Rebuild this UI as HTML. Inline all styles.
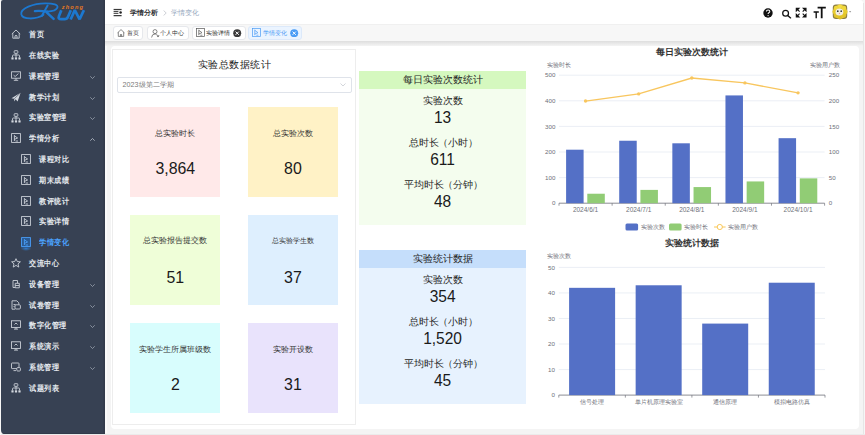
<!DOCTYPE html>
<html><head><meta charset="utf-8"><style>
*{margin:0;padding:0;box-sizing:border-box}
html,body{width:865px;height:435px;overflow:hidden;background:#f3f3f3;font-family:"Liberation Sans",sans-serif;position:relative}
.a{position:absolute}
svg text{font-family:"Liberation Sans",sans-serif}
.mi{position:absolute;left:1px;width:104px;height:20px;color:#e3e7ec;font-size:8px;font-weight:bold;line-height:20px;white-space:nowrap}
.mi .t{position:absolute;left:27.8px;top:0;transform:scale(0.94,1.06);transform-origin:0 52%}
.mi.sub .t{left:37.6px}
.mi svg{position:absolute}
.tab{position:absolute;top:26px;height:13.6px;background:#fff;border:1px solid #e6e8ec;border-radius:3px;font-size:6.4px;line-height:11.6px;color:#333;white-space:nowrap}
.tab.act{background:#ebf4ff;border-color:#dce9fa;color:#4a9cf5}
.sc{position:absolute;width:90px;height:90px}
.sc .l{position:absolute;left:0;width:100%;text-align:center;font-size:7.6px;color:#333;white-space:nowrap;line-height:9px}
.sc .v{position:absolute;left:0;width:100%;text-align:center;font-size:15.9px;color:#1a1a1a;line-height:20px}
.pl{margin-left:-1px}.pr{margin-right:-1px}
.mp{position:absolute;left:359.4px;width:166.4px}
.mp .h{position:absolute;left:0;top:0;width:100%;height:17.6px;text-align:center;font-size:10px;line-height:17.6px;color:#262626;white-space:nowrap}
.mp .l{position:absolute;left:0;width:100%;text-align:center;font-size:10px;line-height:12px;color:#262626;white-space:nowrap}
.mp .v{position:absolute;left:0;width:100%;text-align:center;font-size:15.5px;line-height:16px;color:#1a1a1a;transform:scaleY(1.09);transform-origin:50% 0}
</style></head><body>
<div class="a" style="left:1px;top:0;width:104px;height:433.5px;background:#374153;border-radius:2px 0 0 4px;box-shadow:inset -1.5px -1px 0 #323a4a"></div>
<svg class="a" style="left:0;top:0" width="105" height="24" viewBox="0 0 105 24">
<g fill="none" stroke="#1c78d0" stroke-linecap="round">
<path d="M43.5 14.8 C36 19.8 22.5 19.8 21.3 14.2 C20.3 8.5 33 3.3 45.5 3.3 C53.5 3.3 58.5 4.8 57.4 7.6 C56.3 10.4 51.5 11.4 47.2 11.6" stroke-width="1.8"/>
<path d="M34.8 11.1 Q40 10.4 47.5 11.7" stroke-width="2.2"/>
<path d="M47.6 5.6 L41.8 16" stroke-width="2"/>
<path d="M46.6 12.4 L53.6 18.8" stroke-width="2.5"/>
<path d="M61.3 10.3 L59 16 Q57.8 19.2 61.2 19.2 L64.6 19.2 Q67 19.2 68 16.8 L70.8 10.3" stroke-width="2.7" stroke-linecap="butt"/>
<path d="M70.6 19.5 L74.8 10.1 L79.6 19.3 L83.9 10.1" stroke-width="2.7" stroke-linecap="butt" stroke-linejoin="bevel"/>
</g>
<text x="61.8" y="9.1" font-size="5.6" font-weight="bold" font-style="italic" fill="#e97a22" letter-spacing="1.15">zhong</text>
</svg>
<div class="mi" style="top:25px;color:#e3e7ec"><svg style="left:9.6px;top:4.2px" width="10" height="10" viewBox="0 0 10 10"><path d="M0.8 5 L5 1 L9.2 5 M1.8 4.2 V9.2 H8.2 V4.2 M4 9.2 V6.8 Q5 6 6 6.8 V9.2" fill="none" stroke="#d3d8df" stroke-width="0.85"/></svg><span class="t">首页</span></div>
<div class="mi" style="top:46px;color:#e3e7ec"><svg style="left:9.6px;top:4.2px" width="10" height="10" viewBox="0 0 10 10"><g fill="none" stroke="#d3d8df" stroke-width="0.85"><rect x="3.2" y="0.7" width="3.6" height="2.6" rx="0.5"/><path d="M5 3.3 V7 M1.5 7 V5.8 Q1.5 5 2.3 5 H7.7 Q8.5 5 8.5 5.8 V7"/></g><g fill="#d3d8df"><rect x="0.4" y="7.2" width="2.2" height="2.2" rx="0.5"/><rect x="3.9" y="7.2" width="2.2" height="2.2" rx="0.5"/><rect x="7.4" y="7.2" width="2.2" height="2.2" rx="0.5"/></g></svg><span class="t">在线实验</span></div>
<div class="mi" style="top:67px;color:#e3e7ec"><svg style="left:9.6px;top:4.2px" width="10" height="10" viewBox="0 0 10 10"><g fill="none" stroke="#d3d8df" stroke-width="0.85"><rect x="0.6" y="0.8" width="8.8" height="6.4"/><path d="M5 7.2 V9.2 M2.8 9.3 H7.2 M2.6 4.2 L4.2 5.5 L7.4 2.6"/></g></svg><span class="t">课程管理</span><svg style="left:88.5px;top:9px" width="5" height="3" viewBox="0 0 5 3"><path d="M0.3 0.3 L2.5 2.5 L4.7 0.3" fill="none" stroke="#aab1bd" stroke-width="0.7"/></svg></div>
<div class="mi" style="top:87.8px;color:#e3e7ec"><svg style="left:9.6px;top:4.2px" width="10" height="10" viewBox="0 0 10 10"><path d="M0.5 6.2 L9.6 0.8 L6.6 9.6 L4.6 7.3 L3.2 9.6 L3.2 6.8 Z" fill="#d3d8df"/><path d="M3.2 6.8 L9.6 0.8" stroke="#374153" stroke-width="0.6"/></svg><span class="t">教学计划</span><svg style="left:88.5px;top:9px" width="5" height="3" viewBox="0 0 5 3"><path d="M0.3 0.3 L2.5 2.5 L4.7 0.3" fill="none" stroke="#aab1bd" stroke-width="0.7"/></svg></div>
<div class="mi" style="top:108.4px;color:#e3e7ec"><svg style="left:9.6px;top:4.2px" width="10" height="10" viewBox="0 0 10 10"><g fill="none" stroke="#d3d8df" stroke-width="0.85"><rect x="3.2" y="0.7" width="3.6" height="2.6" rx="0.5"/><path d="M5 3.3 V7 M1.5 7 V5.8 Q1.5 5 2.3 5 H7.7 Q8.5 5 8.5 5.8 V7"/></g><g fill="#d3d8df"><rect x="0.4" y="7.2" width="2.2" height="2.2" rx="0.5"/><rect x="3.9" y="7.2" width="2.2" height="2.2" rx="0.5"/><rect x="7.4" y="7.2" width="2.2" height="2.2" rx="0.5"/></g></svg><span class="t">实验室管理</span><svg style="left:88.5px;top:9px" width="5" height="3" viewBox="0 0 5 3"><path d="M0.3 0.3 L2.5 2.5 L4.7 0.3" fill="none" stroke="#aab1bd" stroke-width="0.7"/></svg></div>
<div class="mi" style="top:129px;color:#e3e7ec"><svg style="left:9.6px;top:4.2px" width="10" height="10" viewBox="0 0 10 10"><g fill="none" stroke="#d3d8df" stroke-width="0.85"><rect x="0.6" y="0.6" width="8.8" height="8.8"/><path d="M3.4 2.2 V8 M3.4 2.8 L6.6 5 L3.4 6.4 M4.6 8 H7"/></g></svg><span class="t">学情分析</span><svg style="left:88.5px;top:8.5px" width="5" height="3" viewBox="0 0 5 3"><path d="M0.3 2.7 L2.5 0.5 L4.7 2.7" fill="none" stroke="#cfd4dc" stroke-width="0.7"/></svg></div>
<div class="mi sub" style="top:150px;color:#e3e7ec"><svg style="left:19.6px;top:4.2px" width="10" height="10" viewBox="0 0 10 10"><g fill="none" stroke="#d3d8df" stroke-width="0.85"><rect x="0.6" y="0.6" width="8.8" height="8.8"/><path d="M3.4 2.2 V8 M3.4 2.8 L6.6 5 L3.4 6.4 M4.6 8 H7"/></g></svg><span class="t">课程对比</span></div>
<div class="mi sub" style="top:170.8px;color:#e3e7ec"><svg style="left:19.6px;top:4.2px" width="10" height="10" viewBox="0 0 10 10"><g fill="none" stroke="#d3d8df" stroke-width="0.85"><rect x="0.6" y="0.6" width="8.8" height="8.8"/><path d="M3.4 2.2 V8 M3.4 2.8 L6.6 5 L3.4 6.4 M4.6 8 H7"/></g></svg><span class="t">期末成绩</span></div>
<div class="mi sub" style="top:191.5px;color:#e3e7ec"><svg style="left:19.6px;top:4.2px" width="10" height="10" viewBox="0 0 10 10"><g fill="none" stroke="#d3d8df" stroke-width="0.85"><rect x="0.6" y="0.6" width="8.8" height="8.8"/><path d="M3.4 2.2 V8 M3.4 2.8 L6.6 5 L3.4 6.4 M4.6 8 H7"/></g></svg><span class="t">教评统计</span></div>
<div class="mi sub" style="top:212.2px;color:#e3e7ec"><svg style="left:19.6px;top:4.2px" width="10" height="10" viewBox="0 0 10 10"><g fill="none" stroke="#d3d8df" stroke-width="0.85"><rect x="0.6" y="0.6" width="8.8" height="8.8"/><path d="M3.4 2.2 V8 M3.4 2.8 L6.6 5 L3.4 6.4 M4.6 8 H7"/></g></svg><span class="t">实验详情</span></div>
<div class="mi sub" style="top:233px;color:#4ba3ff"><svg style="left:19px;top:3.5px" width="12" height="14" viewBox="0 0 12 14"><defs><radialGradient id="gl"><stop offset="0" stop-color="#2d7fd8" stop-opacity="0.9"/><stop offset="1" stop-color="#2d7fd8" stop-opacity="0"/></radialGradient></defs><ellipse cx="6" cy="11.5" rx="5.5" ry="2.5" fill="url(#gl)"/><rect x="1" y="1" width="9.5" height="9.5" fill="#2b5a92"/></svg><svg style="left:19.6px;top:4.2px" width="10" height="10" viewBox="0 0 10 10"><g fill="none" stroke="#4ba3ff" stroke-width="0.85"><rect x="0.6" y="0.6" width="8.8" height="8.8"/><path d="M3.4 2.2 V8 M3.4 2.8 L6.6 5 L3.4 6.4 M4.6 8 H7"/></g></svg><span class="t">学情变化</span></div>
<div class="mi" style="top:254px;color:#e3e7ec"><svg style="left:9.6px;top:4.2px" width="10" height="10" viewBox="0 0 10 10"><path d="M5 0.7 L6.3 3.6 L9.4 3.8 L7 5.9 L7.8 9.1 L5 7.4 L2.2 9.1 L3 5.9 L0.6 3.8 L3.7 3.6 Z" fill="none" stroke="#d3d8df" stroke-width="0.85"/></svg><span class="t">交流中心</span></div>
<div class="mi" style="top:274.8px;color:#e3e7ec"><svg style="left:9.6px;top:4.2px" width="10" height="10" viewBox="0 0 10 10"><g fill="none" stroke="#d3d8df" stroke-width="0.85"><path d="M2 1.5 H6.5 V4.2 M2 1.5 V8.5 H4.2"/><path d="M4.2 4.3 H8.3 V8.8 H4.2 Z M4.2 6.5 H8.3"/></g></svg><span class="t">设备管理</span><svg style="left:88.5px;top:9px" width="5" height="3" viewBox="0 0 5 3"><path d="M0.3 0.3 L2.5 2.5 L4.7 0.3" fill="none" stroke="#aab1bd" stroke-width="0.7"/></svg></div>
<div class="mi" style="top:295.5px;color:#e3e7ec"><svg style="left:9.6px;top:4.2px" width="10" height="10" viewBox="0 0 10 10"><g fill="none" stroke="#d3d8df" stroke-width="0.85"><path d="M1 0.8 H5.8 L7.8 2.8 V4.6 M1 0.8 V9.2 H4"/><rect x="4" y="4.8" width="5.4" height="4.2" rx="1"/><path d="M2.5 4.5 H4.5 M2.5 6.5 H3.5"/></g></svg><span class="t">试卷管理</span><svg style="left:88.5px;top:9px" width="5" height="3" viewBox="0 0 5 3"><path d="M0.3 0.3 L2.5 2.5 L4.7 0.3" fill="none" stroke="#aab1bd" stroke-width="0.7"/></svg></div>
<div class="mi" style="top:316.3px;color:#e3e7ec"><svg style="left:9.6px;top:4.2px" width="10" height="10" viewBox="0 0 10 10"><g fill="none" stroke="#d3d8df" stroke-width="0.85"><rect x="0.5" y="0.8" width="9" height="6.6"/><path d="M3 9.1 H7 M5 7.4 V9.1 M3.5 4.5 L5 3 L6.5 4.5"/></g></svg><span class="t">数字化管理</span><svg style="left:88.5px;top:9px" width="5" height="3" viewBox="0 0 5 3"><path d="M0.3 0.3 L2.5 2.5 L4.7 0.3" fill="none" stroke="#aab1bd" stroke-width="0.7"/></svg></div>
<div class="mi" style="top:337px;color:#e3e7ec"><svg style="left:9.6px;top:4.2px" width="10" height="10" viewBox="0 0 10 10"><g fill="none" stroke="#d3d8df" stroke-width="0.85"><rect x="0.5" y="0.8" width="9" height="6.6"/><path d="M3 9.1 H7 M5 7.4 V9.1 M3.5 4.5 L5 3 L6.5 4.5"/></g></svg><span class="t">系统演示</span><svg style="left:88.5px;top:9px" width="5" height="3" viewBox="0 0 5 3"><path d="M0.3 0.3 L2.5 2.5 L4.7 0.3" fill="none" stroke="#aab1bd" stroke-width="0.7"/></svg></div>
<div class="mi" style="top:357.7px;color:#e3e7ec"><svg style="left:9.6px;top:4.2px" width="10" height="10" viewBox="0 0 10 10"><g fill="none" stroke="#d3d8df" stroke-width="0.85"><rect x="0.5" y="1" width="7.5" height="5.6" rx="0.6"/><path d="M2.5 8.6 H5"/><rect x="5.8" y="5.6" width="3.6" height="3.4" rx="0.8" fill="#374153"/></g></svg><span class="t">系统管理</span><svg style="left:88.5px;top:9px" width="5" height="3" viewBox="0 0 5 3"><path d="M0.3 0.3 L2.5 2.5 L4.7 0.3" fill="none" stroke="#aab1bd" stroke-width="0.7"/></svg></div>
<div class="mi" style="top:378.5px;color:#e3e7ec"><svg style="left:9.6px;top:4.2px" width="10" height="10" viewBox="0 0 10 10"><g fill="none" stroke="#d3d8df" stroke-width="0.85"><rect x="3.2" y="0.7" width="3.6" height="2.6" rx="0.5"/><path d="M5 3.3 V7 M1.5 7 V5.8 Q1.5 5 2.3 5 H7.7 Q8.5 5 8.5 5.8 V7"/></g><g fill="#d3d8df"><rect x="0.4" y="7.2" width="2.2" height="2.2" rx="0.5"/><rect x="3.9" y="7.2" width="2.2" height="2.2" rx="0.5"/><rect x="7.4" y="7.2" width="2.2" height="2.2" rx="0.5"/></g></svg><span class="t">试题列表</span></div>
<div class="a" style="left:105px;top:0;width:758px;height:24px;background:#fff;border-top-right-radius:3px"></div>
<svg class="a" style="left:0;top:0" width="130" height="24" viewBox="0 0 130 24">
<rect x="113.6" y="8.9" width="8" height="1.25" fill="#3a3a3a"/><rect x="113.6" y="10.95" width="4.8" height="1.1" fill="#4a4a4a"/>
<rect x="113.6" y="12.8" width="4.8" height="1.1" fill="#4a4a4a"/><rect x="113.6" y="15" width="8" height="1.25" fill="#3a3a3a"/>
<circle cx="120.6" cy="12.5" r="1.25" fill="#222"/></svg>
<div class="a" style="left:129.5px;top:8px;font-size:7px;font-weight:bold;color:#303133;white-space:nowrap;line-height:9px">学情分析</div>
<svg class="a" style="left:162.5px;top:9.5px" width="4" height="6" viewBox="0 0 4 6"><path d="M0.6 0.5 L3.2 3 L0.6 5.5" fill="none" stroke="#b8bcc4" stroke-width="0.7"/></svg>
<div class="a" style="left:170.7px;top:8px;font-size:7.4px;color:#97a8be;white-space:nowrap;line-height:9px">学情变化</div>
<svg class="a" style="left:0;top:0" width="865" height="24" viewBox="0 0 865 24">
<circle cx="768" cy="13" r="4.7" fill="#111"/>
<path d="M766.4 11.6 Q766.4 9.9 768.1 9.9 Q769.8 9.9 769.8 11.4 Q769.8 12.3 768.8 12.8 Q768.1 13.2 768.1 14" fill="none" stroke="#fff" stroke-width="1.05"/>
<circle cx="768.1" cy="15.6" r="0.6" fill="#fff"/>
<circle cx="785.6" cy="13.3" r="2.9" fill="none" stroke="#111" stroke-width="1.25"/><path d="M787.7 15.4 L790.6 17.9" stroke="#111" stroke-width="1.35" stroke-linecap="round"/>
<g fill="#111" stroke="#111" stroke-width="1.1">
<path d="M796.3 8.3 L799 8.3 L796.3 11 Z M797.2 9.2 L799.6 11.6"/>
<path d="M806 8.3 L803.3 8.3 L806 11 Z M805.1 9.2 L802.7 11.6"/>
<path d="M796.3 17 L799 17 L796.3 14.3 Z M797.2 16.1 L799.6 13.7"/>
<path d="M806 17 L803.3 17 L806 14.3 Z M805.1 16.1 L802.7 13.7"/>
</g>
<path d="M813.6 12 H818.8 M816.2 12 V18.2" stroke="#111" stroke-width="1.4"/>
<path d="M817.6 7.7 H825.8 M821.7 7.7 V18.2" stroke="#111" stroke-width="1.8"/>
<rect x="832.8" y="4.6" width="14.4" height="14.4" rx="3.2" fill="#8c7d45"/>
<circle cx="840" cy="11.8" r="7" fill="#e8cd2e"/>
<circle cx="836" cy="8" r="2.2" fill="#f0d83c"/><circle cx="844" cy="8" r="2.2" fill="#f0d83c"/><circle cx="836" cy="15.6" r="2.2" fill="#e2c42a"/><circle cx="844" cy="15.6" r="2.2" fill="#e2c42a"/>
<circle cx="840" cy="6.2" r="2" fill="#f2dc48"/><circle cx="840" cy="17.4" r="2" fill="#dcbf28"/><circle cx="834.4" cy="11.8" r="2" fill="#e6cb30"/><circle cx="845.6" cy="11.8" r="2" fill="#e6cb30"/>
<ellipse cx="839.4" cy="12" rx="3.9" ry="3.6" fill="#f1ece2"/>
<circle cx="837.8" cy="11.2" r="0.85" fill="#2f3a3a"/><circle cx="841.2" cy="11.2" r="0.85" fill="#2f3a3a"/>
<circle cx="839.5" cy="13.4" r="0.6" fill="#e49a9a"/>
<path d="M849 11.2 L851.2 11.2 L850.1 12.5Z" fill="#777"/>
</svg>
<div class="a" style="left:105px;top:24px;width:758px;height:17px;background:#f7f7f7;border-top:1px solid #f0f0f0"></div>
<div class="tab" style="left:112.5px;width:30.19999999999999px"><svg class="a" style="left:3.8px;top:2px" width="8" height="8" viewBox="0 0 8 8"><path d="M0.6 3.8 L4 0.6 L7.4 3.8 M1.3 3.2 V7.4 H6.7 V3.2 M3.4 7.4 V5.5 H4.6 V7.4" fill="none" stroke="#555" stroke-width="0.7"/></svg><span class="a" style="left:13.8px;top:0">首页</span></div>
<div class="tab" style="left:146.6px;width:42.0px"><svg class="a" style="left:3.5px;top:1.5px" width="9" height="9" viewBox="0 0 9 9"><circle cx="4" cy="2.6" r="2" fill="none" stroke="#555" stroke-width="0.7"/><path d="M0.6 8.5 Q0.8 5 4 5 Q5.5 5 6.3 5.8" fill="none" stroke="#555" stroke-width="0.7"/><path d="M5.5 6.5 L7 8.3 L8.6 6.5 Z" fill="#444"/></svg><span class="a" style="left:12.8px;top:0">个人中心</span></div>
<div class="tab" style="left:191.9px;width:54.19999999999999px"><svg class="a" style="left:3.3px;top:1.2px" width="9" height="9" viewBox="0 0 9 9"><rect x="0.5" y="0.5" width="8" height="8" fill="none" stroke="#555" stroke-width="0.7"/><path d="M2.8 1.8 V7.2 M2.8 2.3 L6 4.7 L2.8 6 M4.3 7.2 H6.4" fill="none" stroke="#555" stroke-width="0.7"/></svg><span class="a" style="left:13.3px;top:0">实验详情</span><svg class="a" style="left:40.3px;top:1.8px" width="8.5" height="8.5" viewBox="0 0 8.5 8.5"><circle cx="4.2" cy="4.2" r="4" fill="#3b3b3b"/><path d="M2.6 2.6 L5.8 5.8 M5.8 2.6 L2.6 5.8" stroke="#fff" stroke-width="1"/></svg></div>
<div class="tab act" style="left:248px;width:54.30000000000001px"><svg class="a" style="left:3.3px;top:1.2px" width="9" height="9" viewBox="0 0 9 9"><rect x="0.5" y="0.5" width="8" height="8" fill="none" stroke="#4a9cf5" stroke-width="0.7"/><path d="M2.8 1.8 V7.2 M2.8 2.3 L6 4.7 L2.8 6 M4.3 7.2 H6.4" fill="none" stroke="#4a9cf5" stroke-width="0.7"/></svg><span class="a" style="left:14px;top:0">学情变化</span><svg class="a" style="left:41px;top:1.8px" width="8.5" height="8.5" viewBox="0 0 8.5 8.5"><circle cx="4.2" cy="4.2" r="4" fill="#4a9cf5"/><path d="M2.6 2.6 L5.8 5.8 M5.8 2.6 L2.6 5.8" stroke="#fff" stroke-width="1"/></svg></div>
<div class="a" style="left:105px;top:41px;width:758px;height:392.5px;background:#f4f4f4"></div>
<div class="a" style="left:105px;top:41px;width:2px;height:392px;background:#fafafa"></div>
<div class="a" style="left:105px;top:41px;width:758px;height:5px;background:linear-gradient(#dedede,#f4f4f4)"></div>
<div class="a" style="left:110.5px;top:45.8px;width:748px;height:382.8px;background:#fff;border-radius:4px"></div>
<div class="a" style="left:112.2px;top:49.2px;width:243.5px;height:376.2px;border:1px solid #ededed"></div>
<div class="a" style="left:112.5px;top:58px;width:243.2px;text-align:center;font-size:10px;letter-spacing:0.5px;text-indent:0.5px;line-height:13px;color:#222;white-space:nowrap">实验总数据统计</div>
<div class="a" style="left:116.6px;top:77.2px;width:235.4px;height:15.4px;border:1px solid #dfe3ea;border-radius:2px;font-size:7.2px;color:#7a7a7a;line-height:13.4px;padding-left:5px;white-space:nowrap">2023级第二学期</div>
<svg class="a" style="left:339.5px;top:83.2px" width="6" height="4" viewBox="0 0 6 4"><path d="M0.5 0.5 L3 3 L5.5 0.5" fill="none" stroke="#c0c4cc" stroke-width="0.7"/></svg>
<div class="sc" style="left:130.3px;top:106.6px;background:#ffe9e9"><div class="l" style="top:22.5px">总实验时长</div><div class="v" style="top:52.7px">3,864</div></div>
<div class="sc" style="left:247.9px;top:106.6px;background:#fff2c6"><div class="l" style="top:22.5px">总实验次数</div><div class="v" style="top:52.7px">80</div></div>
<div class="sc" style="left:130.3px;top:215.0px;background:#effed8"><div class="l" style="top:21.4px">总实验报告提交数</div><div class="v" style="top:52.7px">51</div></div>
<div class="sc" style="left:247.9px;top:215.0px;background:#deeffe"><div class="l" style="top:21.4px"><span style="font-size:7px">总实验学生数</span></div><div class="v" style="top:52.7px">37</div></div>
<div class="sc" style="left:130.3px;top:322.5px;background:#d8fdfd"><div class="l" style="top:22.5px">实验学生所属班级数</div><div class="v" style="top:52.7px">2</div></div>
<div class="sc" style="left:247.9px;top:322.5px;background:#e9e3fc"><div class="l" style="top:22.5px">实验开设数</div><div class="v" style="top:52.7px">31</div></div>
<div class="mp" style="top:71px;height:153.6px;background:#f4fdee"><div class="h" style="background:#d5f8bf">每日实验次数统计</div><div class="l" style="top:23.5px">实验次数</div><div class="v" style="top:37.6px">13</div><div class="l" style="top:65.5px">总时长<span class="pl">（</span>小时<span class="pr">）</span></div><div class="v" style="top:79.6px">611</div><div class="l" style="top:107.5px">平均时长<span class="pl">（</span>分钟<span class="pr">）</span></div><div class="v" style="top:121.6px">48</div></div>
<div class="mp" style="top:250.4px;height:153.2px;background:#e7f2fe"><div class="h" style="background:#c5defb">实验统计数据</div><div class="l" style="top:23.5px">实验次数</div><div class="v" style="top:37.6px">354</div><div class="l" style="top:65.5px">总时长<span class="pl">（</span>小时<span class="pr">）</span></div><div class="v" style="top:79.6px">1,520</div><div class="l" style="top:107.5px">平均时长<span class="pl">（</span>分钟<span class="pr">）</span></div><div class="v" style="top:121.6px">45</div></div>
<svg class="a" style="left:0;top:0" width="865" height="435" viewBox="0 0 865 435"><text x="691.5" y="54.8" font-size="9" font-weight="bold" fill="#333" text-anchor="middle">每日实验次数统计</text><text x="546.8" y="67.2" font-size="5.9" fill="#6e7079">实验时长</text><text x="840" y="67.2" font-size="5.9" fill="#6e7079" text-anchor="end">实验用户数</text><text x="555.4" y="205.40" font-size="6.2" fill="#6e7079" text-anchor="end">0</text><text x="828.8" y="205.40" font-size="6.2" fill="#6e7079">0</text><line x1="559" y1="177.60" x2="824.6" y2="177.60" stroke="#e3e8f1" stroke-width="0.7"/><text x="555.4" y="179.80" font-size="6.2" fill="#6e7079" text-anchor="end">100</text><text x="828.8" y="179.80" font-size="6.2" fill="#6e7079">50</text><line x1="559" y1="152.00" x2="824.6" y2="152.00" stroke="#e3e8f1" stroke-width="0.7"/><text x="555.4" y="154.20" font-size="6.2" fill="#6e7079" text-anchor="end">200</text><text x="828.8" y="154.20" font-size="6.2" fill="#6e7079">100</text><line x1="559" y1="126.40" x2="824.6" y2="126.40" stroke="#e3e8f1" stroke-width="0.7"/><text x="555.4" y="128.60" font-size="6.2" fill="#6e7079" text-anchor="end">300</text><text x="828.8" y="128.60" font-size="6.2" fill="#6e7079">150</text><line x1="559" y1="100.80" x2="824.6" y2="100.80" stroke="#e3e8f1" stroke-width="0.7"/><text x="555.4" y="103.00" font-size="6.2" fill="#6e7079" text-anchor="end">400</text><text x="828.8" y="103.00" font-size="6.2" fill="#6e7079">200</text><line x1="559" y1="75.20" x2="824.6" y2="75.20" stroke="#e3e8f1" stroke-width="0.7"/><text x="555.4" y="77.40" font-size="6.2" fill="#6e7079" text-anchor="end">500</text><text x="828.8" y="77.40" font-size="6.2" fill="#6e7079">250</text><line x1="559" y1="203.2" x2="824.6" y2="203.2" stroke="#6e7079" stroke-width="0.8"/><line x1="559.00" y1="203.2" x2="559.00" y2="205.7" stroke="#6e7079" stroke-width="0.7"/><rect x="566.10" y="149.70" width="17.5" height="53.50" fill="#5470c6"/><rect x="587.30" y="193.73" width="17.5" height="9.47" fill="#91cc75"/><text x="585.56" y="212.4" font-size="6.5" fill="#6e7079" text-anchor="middle">2024/6/1</text><line x1="612.12" y1="203.2" x2="612.12" y2="205.7" stroke="#6e7079" stroke-width="0.7"/><rect x="619.22" y="140.74" width="17.5" height="62.46" fill="#5470c6"/><rect x="640.42" y="189.89" width="17.5" height="13.31" fill="#91cc75"/><text x="638.68" y="212.4" font-size="6.5" fill="#6e7079" text-anchor="middle">2024/7/1</text><line x1="665.24" y1="203.2" x2="665.24" y2="205.7" stroke="#6e7079" stroke-width="0.7"/><rect x="672.34" y="143.30" width="17.5" height="59.90" fill="#5470c6"/><rect x="693.54" y="187.07" width="17.5" height="16.13" fill="#91cc75"/><text x="691.80" y="212.4" font-size="6.5" fill="#6e7079" text-anchor="middle">2024/8/1</text><line x1="718.36" y1="203.2" x2="718.36" y2="205.7" stroke="#6e7079" stroke-width="0.7"/><rect x="725.46" y="95.42" width="17.5" height="107.78" fill="#5470c6"/><rect x="746.66" y="181.44" width="17.5" height="21.76" fill="#91cc75"/><text x="744.92" y="212.4" font-size="6.5" fill="#6e7079" text-anchor="middle">2024/9/1</text><line x1="771.48" y1="203.2" x2="771.48" y2="205.7" stroke="#6e7079" stroke-width="0.7"/><rect x="778.58" y="138.18" width="17.5" height="65.02" fill="#5470c6"/><rect x="799.78" y="178.37" width="17.5" height="24.83" fill="#91cc75"/><text x="798.04" y="212.4" font-size="6.5" fill="#6e7079" text-anchor="middle">2024/10/1</text><line x1="824.6" y1="203.2" x2="824.6" y2="205.7" stroke="#6e7079" stroke-width="0.7"/><polyline points="585.56,101.06 638.68,93.89 691.80,78.02 744.92,82.88 798.04,92.86" fill="none" stroke="#f8c65e" stroke-width="1.3"/><circle cx="585.56" cy="101.06" r="1.7" fill="#f8c65e"/><circle cx="638.68" cy="93.89" r="1.7" fill="#f8c65e"/><circle cx="691.80" cy="78.02" r="1.7" fill="#f8c65e"/><circle cx="744.92" cy="82.88" r="1.7" fill="#f8c65e"/><circle cx="798.04" cy="92.86" r="1.7" fill="#f8c65e"/><rect x="625.5" y="223.5" width="12.6" height="7" rx="1.5" fill="#5470c6"/><text x="640.5" y="228.7" font-size="6.1" fill="#6e7079">实验次数</text><rect x="669" y="223.5" width="12.6" height="7" rx="1.5" fill="#91cc75"/><text x="684" y="228.7" font-size="6.1" fill="#6e7079">实验时长</text><line x1="714" y1="227" x2="725.6" y2="227" stroke="#fac858" stroke-width="1"/><circle cx="719.8" cy="227" r="2.6" fill="#fff" stroke="#fac858" stroke-width="1"/><text x="728.2" y="228.7" font-size="6.1" fill="#6e7079">实验用户数</text><text x="692" y="246.4" font-size="9" font-weight="bold" fill="#333" text-anchor="middle">实验统计数据</text><text x="546.6" y="258.2" font-size="5.9" fill="#6e7079">实验次数</text><text x="554.9" y="397.30" font-size="6.2" fill="#6e7079" text-anchor="end">0</text><line x1="558.8" y1="369.56" x2="825" y2="369.56" stroke="#e3e8f1" stroke-width="0.7"/><text x="554.9" y="371.76" font-size="6.2" fill="#6e7079" text-anchor="end">10</text><line x1="558.8" y1="344.02" x2="825" y2="344.02" stroke="#e3e8f1" stroke-width="0.7"/><text x="554.9" y="346.22" font-size="6.2" fill="#6e7079" text-anchor="end">20</text><line x1="558.8" y1="318.48" x2="825" y2="318.48" stroke="#e3e8f1" stroke-width="0.7"/><text x="554.9" y="320.68" font-size="6.2" fill="#6e7079" text-anchor="end">30</text><line x1="558.8" y1="292.94" x2="825" y2="292.94" stroke="#e3e8f1" stroke-width="0.7"/><text x="554.9" y="295.14" font-size="6.2" fill="#6e7079" text-anchor="end">40</text><line x1="558.8" y1="267.40" x2="825" y2="267.40" stroke="#e3e8f1" stroke-width="0.7"/><text x="554.9" y="269.60" font-size="6.2" fill="#6e7079" text-anchor="end">50</text><line x1="558.8" y1="395.1" x2="825" y2="395.1" stroke="#6e7079" stroke-width="0.8"/><line x1="558.80" y1="395.1" x2="558.80" y2="397.6" stroke="#6e7079" stroke-width="0.7"/><rect x="569.10" y="287.83" width="46" height="107.27" fill="#5470c6"/><text x="592.07" y="403.9" font-size="5.9" fill="#6e7079" text-anchor="middle">信号处理</text><line x1="625.35" y1="395.1" x2="625.35" y2="397.6" stroke="#6e7079" stroke-width="0.7"/><rect x="635.65" y="285.28" width="46" height="109.82" fill="#5470c6"/><text x="658.62" y="403.9" font-size="5.9" fill="#6e7079" text-anchor="middle">单片机原理实验室</text><line x1="691.90" y1="395.1" x2="691.90" y2="397.6" stroke="#6e7079" stroke-width="0.7"/><rect x="702.20" y="323.59" width="46" height="71.51" fill="#5470c6"/><text x="725.17" y="403.9" font-size="5.9" fill="#6e7079" text-anchor="middle">通信原理</text><line x1="758.45" y1="395.1" x2="758.45" y2="397.6" stroke="#6e7079" stroke-width="0.7"/><rect x="768.75" y="282.72" width="46" height="112.38" fill="#5470c6"/><text x="791.73" y="403.9" font-size="5.9" fill="#6e7079" text-anchor="middle">模拟电路仿真</text><line x1="825" y1="395.1" x2="825" y2="397.6" stroke="#6e7079" stroke-width="0.7"/></svg>
<div class="a" style="left:863px;top:0;width:2px;height:435px;background:#f6f6f6"></div>
<div class="a" style="left:862.5px;top:3px;width:1px;height:431px;background:#e6e6e6"></div>
<div class="a" style="left:0;top:433.5px;width:865px;height:2px;background:#ebebeb"></div>
<div class="a" style="left:0;top:0;width:1px;height:435px;background:#f7f7f7"></div>
</body></html>
